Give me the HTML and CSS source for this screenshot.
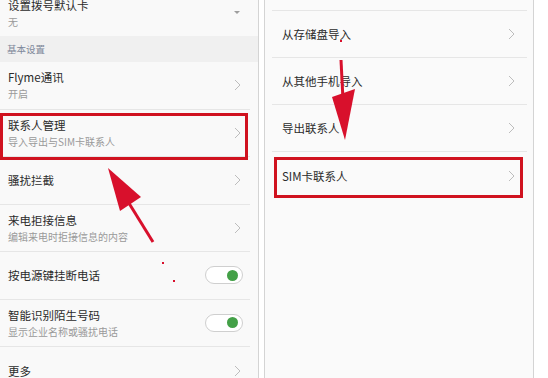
FILE: index.html
```html
<!DOCTYPE html>
<html lang="zh-CN">
<head>
    <meta charset="UTF-8">
    <meta name="viewport" content="width=device-width, initial-scale=1.0">
    <title>联系人管理</title>
    <link rel="stylesheet" href="styles.css">
</head>
<body>
    <div class="screens">
        <!-- 左侧：通话设置 -->
        <div class="screen screen-left">
            <div class="list list-left">
                <div class="item item-first">
                    <div class="item-text">
                        <div class="title">设置拨号默认卡</div>
                        <div class="desc">无</div>
                    </div>
                    <span class="dropdown"></span>
                </div>
            </div>
            <div class="section">基本设置</div>
            <div class="list list-left">
                <div class="item">
                    <div class="item-text">
                        <div class="title">Flyme通讯</div>
                        <div class="desc">开启</div>
                    </div>
                    <svg class="chevron" viewBox="0 0 7 12" width="7" height="12"><path d="M1 1l5 5-5 5" /></svg>
                </div>
                <div class="item item-marked">
                    <div class="item-text">
                        <div class="title">联系人管理</div>
                        <div class="desc">导入导出与SIM卡联系人</div>
                    </div>
                    <svg class="chevron" viewBox="0 0 7 12" width="7" height="12"><path d="M1 1l5 5-5 5" /></svg>
                </div>
                <div class="item">
                    <div class="item-text">
                        <div class="title">骚扰拦截</div>
                    </div>
                    <svg class="chevron" viewBox="0 0 7 12" width="7" height="12"><path d="M1 1l5 5-5 5" /></svg>
                </div>
                <div class="item">
                    <div class="item-text">
                        <div class="title">来电拒接信息</div>
                        <div class="desc">编辑来电时拒接信息的内容</div>
                    </div>
                    <svg class="chevron" viewBox="0 0 7 12" width="7" height="12"><path d="M1 1l5 5-5 5" /></svg>
                </div>
                <div class="item">
                    <div class="item-text">
                        <div class="title">按电源键挂断电话</div>
                    </div>
                    <span class="switch"><span class="knob"></span></span>
                </div>
                <div class="item">
                    <div class="item-text">
                        <div class="title">智能识别陌生号码</div>
                        <div class="desc">显示企业名称或骚扰电话</div>
                    </div>
                    <span class="switch"><span class="knob"></span></span>
                </div>
                <div class="item">
                    <div class="item-text">
                        <div class="title">更多</div>
                    </div>
                    <svg class="chevron" viewBox="0 0 7 12" width="7" height="12"><path d="M1 1l5 5-5 5" /></svg>
                </div>
            </div>
        </div>

        <!-- 右侧：联系人管理 -->
        <div class="screen screen-right">
            <div class="list list-right">
                <div class="item item-top"></div>
                <div class="item">
                    <div class="title">从存储盘导入</div>
                    <svg class="chevron" viewBox="0 0 7 12" width="7" height="12"><path d="M1 1l5 5-5 5" /></svg>
                </div>
                <div class="item">
                    <div class="title">从其他手机导入</div>
                    <svg class="chevron" viewBox="0 0 7 12" width="7" height="12"><path d="M1 1l5 5-5 5" /></svg>
                </div>
                <div class="item">
                    <div class="title">导出联系人</div>
                    <svg class="chevron" viewBox="0 0 7 12" width="7" height="12"><path d="M1 1l5 5-5 5" /></svg>
                </div>
                <div class="item item-marked item-last">
                    <div class="title">SIM卡联系人</div>
                    <svg class="chevron" viewBox="0 0 7 12" width="7" height="12"><path d="M1 1l5 5-5 5" /></svg>
                </div>
            </div>
        </div>

        <!-- 红色箭头标注 -->
        <svg class="arrows" viewBox="0 0 548 378" width="548" height="378">
            <line x1="153" y1="242" x2="127" y2="200" stroke="#d8102c" stroke-width="3" />
            <polygon points="108,168 141,197 120,211" fill="#d8102c" />
            <line x1="341" y1="60" x2="343" y2="100" stroke="#d8102c" stroke-width="3" />
            <polygon points="332,97 355,89 345,140" fill="#d8102c" />
            <rect x="340" y="40" width="2" height="2" fill="#d8102c" />
            <rect x="162" y="262" width="2" height="2" fill="#d8102c" />
            <rect x="173" y="280" width="2" height="2" fill="#d8102c" />
        </svg>
    </div>
</body>
</html>
```

FILE: styles.css
```css
body {
    margin: 0;
    width: 548px;
    height: 378px;
    overflow: hidden;
    background: #fff;
    font-family: "Noto Sans CJK SC", "Noto Sans", sans-serif;
    color: #2b2b2b;
}
.screens {
    position: relative;
    display: flex;
    gap: 5px;
    height: 378px;
}
.screen {
    height: 100%;
    overflow: hidden;
    background: #f9f9f9;
}
.screen-left {
    width: 258px;
    border-right: 1px solid #d4d4d4;
}
.screen-right {
    width: 268px;
    border-left: 1px solid #d4d4d4;
    border-right: 1px solid #d4d4d4;
    background: #fafafa;
}
/* Заголовок секции */
.section {
    height: 26px;
    display: flex;
    align-items: center;
    padding-left: 7px;
    background: #f0f0f0;
    font-size: 9.5px;
    color: #7d8799;
}
.list-left {
    margin-right: 8px;
}
.item {
    position: relative;
    display: flex;
    align-items: center;
    justify-content: space-between;
    box-sizing: border-box;
    height: 47.5px;
    border-bottom: 1px solid #e6e6e6;
}
.list-left .item {
    padding: 0 9px 0 8px;
}
.list-left .item:last-child {
    border-bottom: none;
}
.item-first {
    margin-top: -11px;
    height: 47px;
    border-bottom: none;
}
.title {
    font-size: 11.5px;
    line-height: 16px;
    white-space: nowrap;
}
.desc {
    font-size: 10px;
    line-height: 14px;
    margin-top: 2px;
    color: #9a9a9a;
    white-space: nowrap;
}
.chevron {
    flex: none;
}
.chevron path {
    fill: none;
    stroke: #bdbdbd;
    stroke-width: 1;
}
.dropdown {
    width: 0;
    height: 0;
    margin-right: 1px;
    border-left: 3px solid transparent;
    border-right: 3px solid transparent;
    border-top: 3px solid #9e9e9e;
}
/* Переключатель */
.switch {
    display: flex;
    align-items: center;
    justify-content: flex-end;
    box-sizing: border-box;
    width: 38px;
    height: 18px;
    margin-right: -2px;
    padding: 0 4px;
    border: 1px solid #cfcfcf;
    border-radius: 9px;
    background: #fff;
}
.knob {
    width: 11px;
    height: 11px;
    border-radius: 50%;
    background: #43a047;
}
/* Правый экран */
.list-right {
    margin: 0 6px 0 7px;
}
.list-right .item {
    height: 47px;
    padding: 0 12px 0 10px;
}
.list-right .item-top {
    height: 11px;
}
.list-right .item-last {
    border-bottom: none;
}
/* Красная рамка выделения */
.item-marked::after {
    content: "";
    position: absolute;
    border: 3px solid #d0121f;
}
.list-left .item-marked::after {
    top: 3px;
    bottom: -4px;
    left: 0;
    right: 2px;
}
.list-right .item-marked::after {
    top: 5px;
    bottom: 1px;
    left: 2px;
    right: 4px;
}
.arrows {
    position: absolute;
    top: 0;
    left: 0;
    pointer-events: none;
}
```
